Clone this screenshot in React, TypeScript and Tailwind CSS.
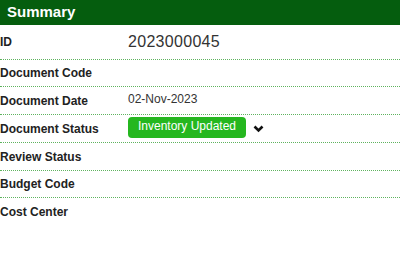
export default function App() {
  return (
    <div className="w-[400px] h-[263px] bg-white font-['Liberation_Sans',Arial,sans-serif] text-[#222]">
      <div className="h-[25px] bg-[#055d0e] flex items-center px-[7px]">
        <span className="text-white font-bold text-[15px]">Summary</span>
      </div>
      <Row label="ID" h="h-[35px]">
        <span className="text-[16px] text-[#333] tracking-[0.3px]">2023000045</span>
      </Row>
      <Row label="Document Code" />
      <Row label="Document Date" h="h-[28px]">
        <span className="text-[12px] text-[#333] -mt-[3px]">02-Nov-2023</span>
      </Row>
      <Row label="Document Status" h="h-[28px]">
        <span className="flex items-center gap-[7px]">
          <span className="h-[21px] w-[118px] rounded-[4px] bg-[#25b71f] text-white text-[12px] flex items-center justify-center pb-[3px] -mt-[2px]">
            Inventory Updated
          </span>
          <ChevronDown />
        </span>
      </Row>
      <Row label="Review Status" h="h-[28px]" />
      <Row label="Budget Code" />
      <Row label="Cost Center" last />
    </div>
  );
}

function Row({
  label,
  children,
  h = "h-[27px]",
  last,
}: {
  label: string;
  children?: React.ReactNode;
  h?: string;
  last?: boolean;
}) {
  return (
    <div
      className={`flex items-center ${h} ${
        last ? "" : "border-b border-dotted border-[#5fb35f]"
      }`}
    >
      <div className="w-[128px] shrink-0 text-[12px] font-bold">{label}</div>
      <div className="flex items-center">{children}</div>
    </div>
  );
}

function ChevronDown() {
  return (
    <svg width="11" height="8" viewBox="0 0 11 8" fill="none">
      <path d="M1.5 1.5L5.5 5.5L9.5 1.5" stroke="#111" strokeWidth="2.6" />
    </svg>
  );
}
